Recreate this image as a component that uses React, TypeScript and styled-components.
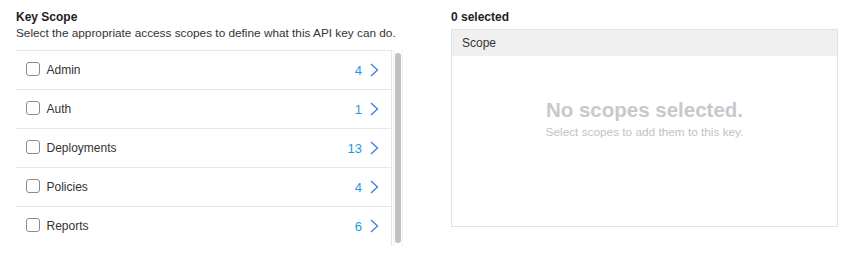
import { ReactElement } from 'react'
import styled, { createGlobalStyle } from 'styled-components'

const GlobalStyle = createGlobalStyle`
  body {
    margin: 0;
    background: #fff;
    font-family: 'Liberation Sans', Arial, Helvetica, sans-serif;
    color: #333;
  }
`

const SPage = styled.div`
  display: grid;
  grid-template-columns: 387px 387px;
  column-gap: 48px;
  padding: 9px 12px 0 16px;
`

const SColumn = styled.div`
  display: flex;
  flex-direction: column;
`

const STitle = styled.div`
  font-size: 12px;
  line-height: 16px;
  font-weight: 700;
  color: #222;
`

const SSubtitle = styled.div`
  font-size: 11.8px;
  line-height: 16px;
  color: #333;
  margin-bottom: 9px;
  white-space: nowrap;
`

const SList = styled.div`
  height: 196px;
  display: flex;
`

const SRows = styled.div`
  flex: 1;
  overflow: hidden;
  border-top: 1px solid #e6e6e6;
  border-right: 1px solid #e6e6e6;
`

const SScrollTrack = styled.div`
  box-sizing: border-box;
  width: 10px;
  margin-left: 1px;
  border-left: 1px solid #f2f2f2;
  border-right: 1px solid #f2f2f2;
  padding: 3px 1px;
  display: flex;
`

const SScrollThumb = styled.div`
  flex: 1;
  background: #c1c1c1;
  border-radius: 3px;
`

const SRow = styled.div`
  display: flex;
  align-items: center;
  height: 38px;
  border-bottom: 1px solid #e6e6e6;
  padding: 0 12px 0 10px;

  &:last-child {
    border-bottom-color: transparent;
  }
`

const SCheckbox = styled.span`
  box-sizing: border-box;
  width: 13.5px;
  height: 13.5px;
  border: 1.5px solid #8c8c8c;
  border-radius: 3px;
  margin-right: 7px;
  flex-shrink: 0;
  position: relative;
  top: -1px;
`

const SLabel = styled.span`
  flex: 1;
  font-size: 12px;
  color: #333;
`

const SCount = styled.span`
  font-size: 13px;
  color: #1c9be2;
  margin-right: 8px;
`

const SPanel = styled.div`
  margin-top: 4px;
  height: 196px;
  border: 1px solid #e2e2e2;
  display: flex;
  flex-direction: column;
`

const SPanelHeader = styled.div`
  height: 26px;
  background: #f0f0f0;
  font-size: 12px;
  line-height: 26px;
  padding-left: 10px;
  color: #333;
`

const SEmpty = styled.div`
  display: flex;
  flex-direction: column;
  align-items: center;
  padding-top: 42px;
`

const SEmptyTitle = styled.div`
  font-size: 20.5px;
  line-height: 24px;
  font-weight: 700;
  color: #c6c9cd;
`

const SEmptyText = styled.div`
  font-size: 11.8px;
  line-height: 20px;
  color: #c2c2c2;
`

const scopes = [
  { name: 'Admin', count: 4 },
  { name: 'Auth', count: 1 },
  { name: 'Deployments', count: 13 },
  { name: 'Policies', count: 4 },
  { name: 'Reports', count: 6 },
]

function Chevron(): ReactElement {
  return (
    <svg width="9" height="14" viewBox="0 0 9 14" fill="none">
      <path d="M1 1l6.5 6L1 13" stroke="#3b7ee0" strokeWidth="1.3" />
    </svg>
  )
}

function App(): ReactElement {
  return (
    <>
      <GlobalStyle />
      <SPage>
        <SColumn>
          <STitle>Key Scope</STitle>
          <SSubtitle>Select the appropriate access scopes to define what this API key can do.</SSubtitle>
          <SList>
            <SRows>
              {scopes.map((s) => (
                <SRow key={s.name}>
                  <SCheckbox />
                  <SLabel>{s.name}</SLabel>
                  <SCount>{s.count}</SCount>
                  <Chevron />
                </SRow>
              ))}
            </SRows>
            <SScrollTrack>
              <SScrollThumb />
            </SScrollTrack>
          </SList>
        </SColumn>
        <SColumn>
          <STitle>0 selected</STitle>
          <SPanel>
            <SPanelHeader>Scope</SPanelHeader>
            <SEmpty>
              <SEmptyTitle>No scopes selected.</SEmptyTitle>
              <SEmptyText>Select scopes to add them to this key.</SEmptyText>
            </SEmpty>
          </SPanel>
        </SColumn>
      </SPage>
    </>
  )
}

export default App
